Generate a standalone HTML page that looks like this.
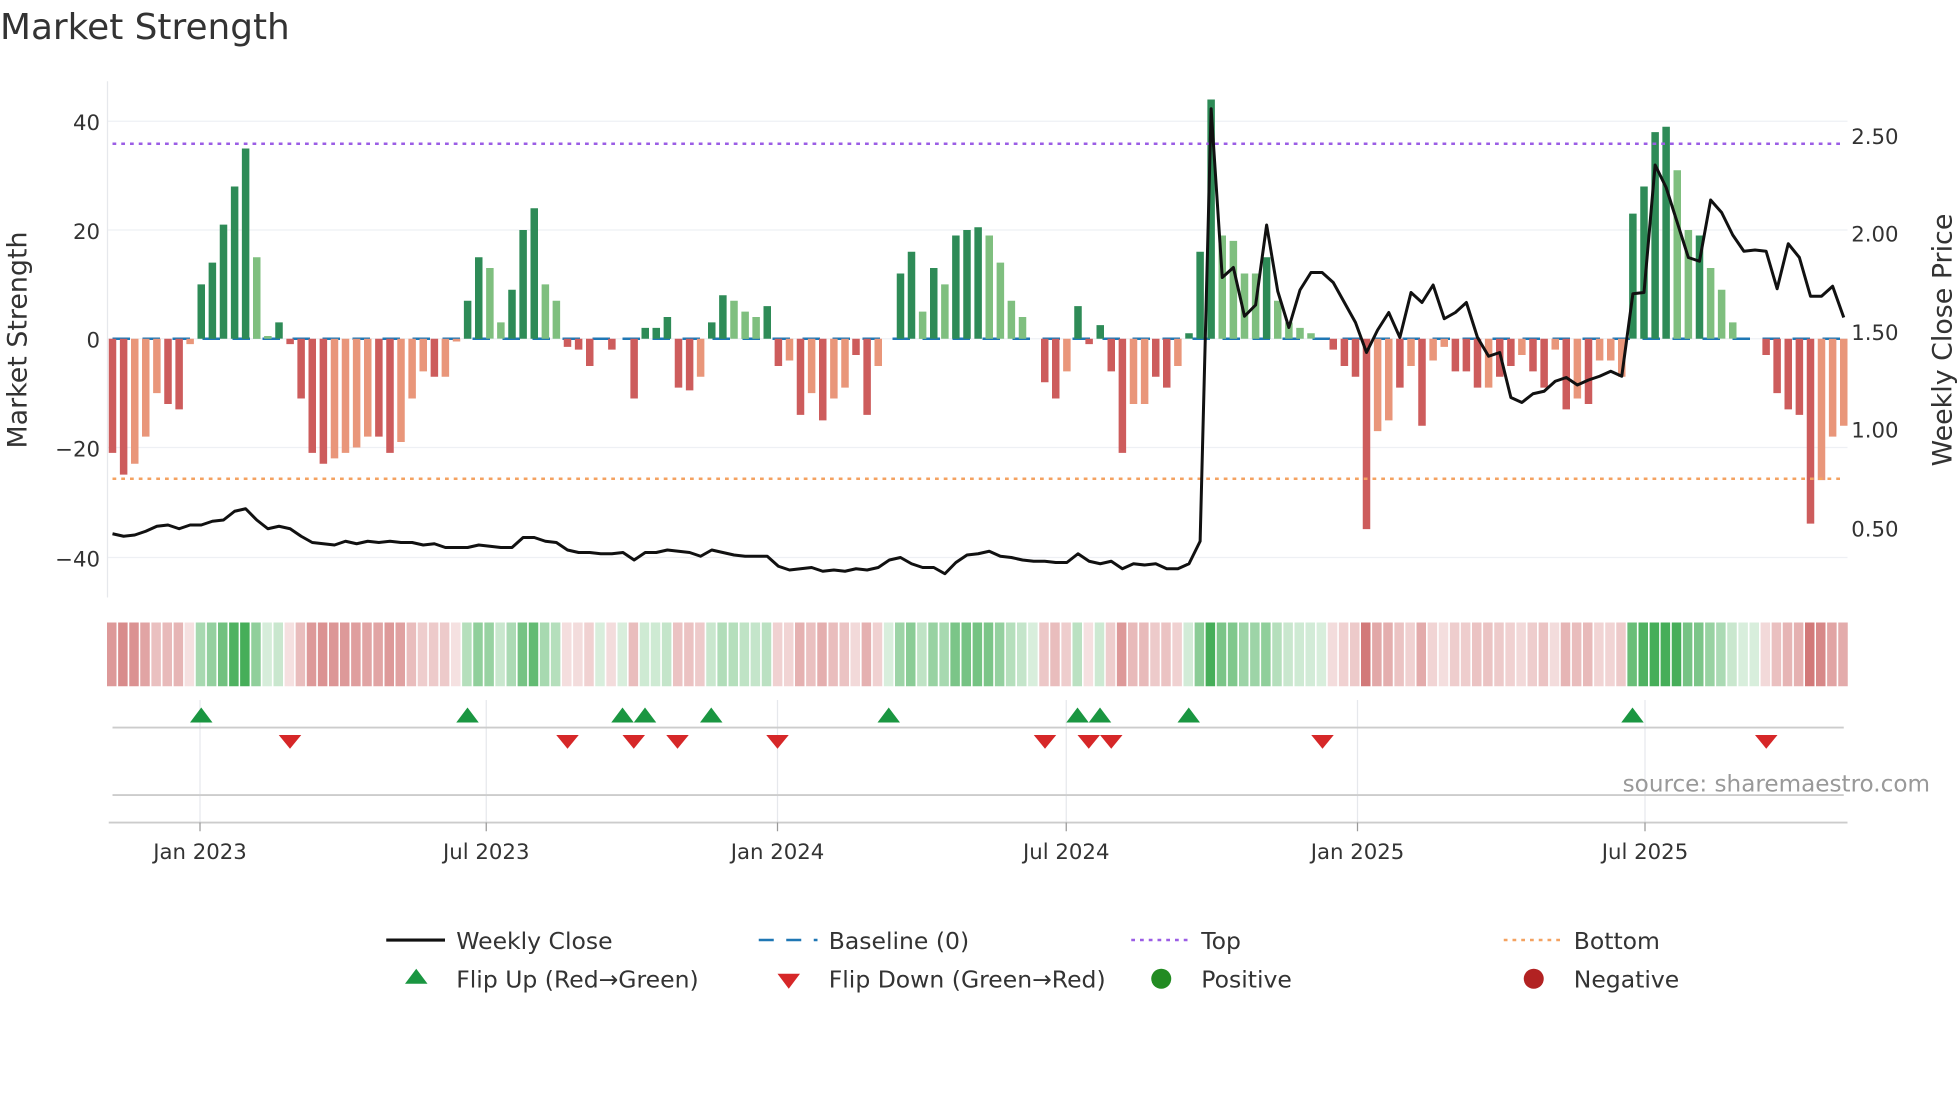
<!DOCTYPE html>
<html><head><meta charset="utf-8"><style>
html,body{margin:0;padding:0;background:#fff;width:1960px;height:1102px;overflow:hidden}
svg{display:block;font-family:"DejaVu Sans","Liberation Sans",sans-serif}
</style></head><body>
<svg id="s" width="1960" height="1102" viewBox="0 0 1568 881.6" xmlns="http://www.w3.org/2000/svg">
<rect width="1568" height="882" fill="#fff"/>
<text x="0" y="31" font-size="28.7" fill="#333">Market Strength</text>
<g stroke="#eef0f4" stroke-width="1">
<line x1="86" x2="1478" y1="97" y2="97"/><line x1="86" x2="1478" y1="184" y2="184"/><line x1="86" x2="1478" y1="271" y2="271"/><line x1="86" x2="1478" y1="358" y2="358"/><line x1="86" x2="1478" y1="446" y2="446"/>
</g>
<line x1="86" x2="86" y1="65" y2="478" stroke="#e6e8ec"/>
<g font-size="17" fill="#333" text-anchor="end">
<text x="80" y="104">40</text><text x="80" y="191">20</text><text x="80" y="278">0</text><text x="80" y="365">−20</text><text x="80" y="453">−40</text>
</g>
<g font-size="17" fill="#333">
<text x="1481" y="115">2.50</text><text x="1481" y="193">2.00</text><text x="1481" y="272">1.50</text><text x="1481" y="350">1.00</text><text x="1481" y="429">0.50</text>
</g>
<text transform="translate(21,272) rotate(-90)" font-size="21.5" fill="#333" text-anchor="middle">Market Strength</text>
<text transform="translate(1561,272) rotate(-90)" font-size="21.5" fill="#333" text-anchor="middle">Weekly Close Price</text>
<line x1="90" x2="1475" y1="271" y2="271" stroke="#1f77b4" stroke-width="2" stroke-dasharray="14,10"/>
<g id="bars"></g>
<line x1="90" x2="1475" y1="115" y2="115" stroke="#9b5de5" stroke-width="2" stroke-dasharray="3,4"/>
<line x1="90" x2="1475" y1="383" y2="383" stroke="#f4a261" stroke-width="2" stroke-dasharray="3,4"/>
<polyline id="price" fill="none" stroke="#111" stroke-width="2.4" stroke-linejoin="round"/>
<g id="heat"></g>
<g stroke="#e6e8ec"><line x1="160" x2="160" y1="560" y2="658"/><line x1="389" x2="389" y1="560" y2="658"/><line x1="622" x2="622" y1="560" y2="658"/><line x1="853" x2="853" y1="560" y2="658"/><line x1="1086" x2="1086" y1="560" y2="658"/><line x1="1316" x2="1316" y1="560" y2="658"/></g>
<line x1="90" x2="1475" y1="582" y2="582" stroke="#ccc" stroke-width="1.5"/>
<line x1="90" x2="1475" y1="636" y2="636" stroke="#ccc" stroke-width="1.5"/>
<line x1="87" x2="1478" y1="658" y2="658" stroke="#ccc" stroke-width="1.5"/>
<g id="flips"></g>
<g stroke="#999"><line x1="160" x2="160" y1="658" y2="665"/><line x1="389" x2="389" y1="658" y2="665"/><line x1="622" x2="622" y1="658" y2="665"/><line x1="853" x2="853" y1="658" y2="665"/><line x1="1086" x2="1086" y1="658" y2="665"/><line x1="1316" x2="1316" y1="658" y2="665"/></g>
<g font-size="17" fill="#333" text-anchor="middle">
<text x="160" y="687">Jan 2023</text><text x="389" y="687">Jul 2023</text><text x="622" y="687">Jan 2024</text><text x="853" y="687">Jul 2024</text><text x="1086" y="687">Jan 2025</text><text x="1316" y="687">Jul 2025</text>
</g>
<text x="1544" y="633" font-size="18.5" fill="#999" text-anchor="end">source: sharemaestro.com</text>
<g font-size="18.8" fill="#333">
<line x1="309" x2="356" y1="752" y2="752" stroke="#111" stroke-width="2.5"/><text x="365" y="759">Weekly Close</text>
<line x1="607" x2="654" y1="752" y2="752" stroke="#1f77b4" stroke-width="2" stroke-dasharray="12,10"/><text x="663" y="759">Baseline (0)</text>
<line x1="905" x2="952" y1="752" y2="752" stroke="#9b5de5" stroke-width="2" stroke-dasharray="3,4"/><text x="961" y="759">Top</text>
<line x1="1203" x2="1250" y1="752" y2="752" stroke="#f4a261" stroke-width="2" stroke-dasharray="3,4"/><text x="1259" y="759">Bottom</text>
<polygon points="324,787 342,787 333,775" fill="#1a9641"/><text x="365" y="790">Flip Up (Red→Green)</text>
<polygon points="622,779 640,779 631,791" fill="#d62728"/><text x="663" y="790">Flip Down (Green→Red)</text>
<circle cx="929" cy="783" r="8" fill="#228b22"/><text x="961" y="790">Positive</text>
<circle cx="1227" cy="783" r="8" fill="#b22222"/><text x="1259" y="790">Negative</text>
</g>
</svg>
<script>
var d="-21R -25R -23O -18O -10O -12R -13R -1O 10D 14D 21D 28D 35D 15L 0.5L 3D -1R -11R -21R -23R -22O -21O -20O -18O -18R -21R -19O -11O -6O -7R -7O -0.5O 7D 15D 13L 3L 9D 20D 24D 10L 7L -1.5R -2R -5R 0Z -2R 0Z -11R 2D 2D 4D -9R -9.5R -7O 3D 8D 7L 5L 4L 6D -5R -4O -14R -10O -15R -11O -9O -3R -14R -5O 0Z 12D 16D 5L 13D 10L 19D 20D 20.5D 19L 14L 7L 4L 0Z -8R -11R -6O 6D -1R 2.5D -6R -21R -12O -12O -7R -9R -5O 1D 16D 44D 19L 18L 12L 12L 15D 7L 3L 2L 1L 0Z -2R -5R -7R -35R -17O -15O -9R -5O -16R -4O -1.5O -6R -6R -9R -9O -7R -5R -3O -6R -9R -2O -13R -11O -12R -4O -4O -7O 23D 28D 38D 39D 31L 20L 19D 13L 9L 3L 0Z 0Z -3R -10R -13R -14R -34R -26O -18O -16O".split(" ");
var col={D:"#2e8b57",L:"#7fbf7f",R:"#cd5c5c",O:"#e9967a",Z:"none"};
var n=d.length,st=(1475-90)/(n-1),b="",h="";
for(var i=0;i<n;i++){var v=parseFloat(d[i]),t=d[i].slice(-1),x=90+i*st;
 if(t!="Z"){var y=271-v*4.35;b+='<rect x="'+(x-3).toFixed(1)+'" y="'+Math.min(y,271).toFixed(1)+'" width="6" height="'+Math.max(Math.abs(v*4.35),1.5).toFixed(1)+'" fill="'+col[t]+'"/>';}
 var a=Math.min(0.2+Math.abs(v)/40,0.95);var c=v>=0?"rgba(60,170,80,"+a.toFixed(2)+")":"rgba(200,90,90,"+(a*0.85).toFixed(2)+")";
 h+='<rect x="'+(x-4.4).toFixed(1)+'" y="498" width="'+(st-1.3).toFixed(1)+'" height="51" fill="'+c+'"/>';}
document.getElementById("bars").innerHTML=b;document.getElementById("heat").innerHTML=h;
var p=[427,429,428,425,421,420,423,420,420,417,416,409,407,416,423,421,423,429,434,435,436,433,435,433,434,433,434,434,436,435,438,438,438,436,437,438,438,430,430,433,434,440,442,442,443,443,442,448,442,442,440,441,442,445,440,442,444,445,445,445,453,456,455,454,457,456,457,455,456,454,448,446,451,454,454,459,450,444,443,441,445,446,448,449,449,450,450,443,449,451,449,455,451,452,451,455,455,451,433,87,222,214,253,244,180,233,262,232,218,218,226,242,258,282,264,250,270,234,242,228,255,250,242,270,285,282,318,322,315,313,305,302,308,304,301,297,301,235,234,132,150,178,206,209,160,170,188,201,200,201,231,195,206,237,237,229,254];
var ps="",pst=(1475-90)/(p.length-1);for(var j=0;j<p.length;j++)ps+=(90+j*pst).toFixed(1)+","+p[j]+" ";
document.getElementById("price").setAttribute("points",ps);
var up=[161,374,498,516,569,711,862,880,951,1306],dn=[232,454,507,542,622,836,871,889,1058,1413],f="";
up.forEach(function(x){f+='<polygon points="'+(x-9)+',578 '+(x+9)+',578 '+x+',566" fill="#1a9641"/>';});
dn.forEach(function(x){f+='<polygon points="'+(x-9)+',588 '+(x+9)+',588 '+x+',599" fill="#d62728"/>';});
document.getElementById("flips").innerHTML=f;
</script>
</body></html>
